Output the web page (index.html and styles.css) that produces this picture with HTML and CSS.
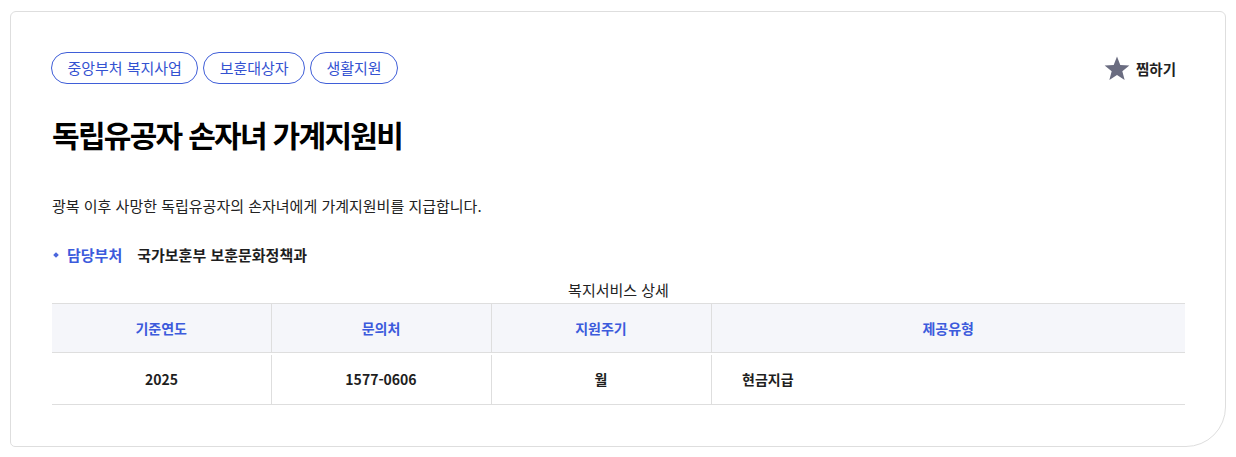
FILE: index.html
```html
<!DOCTYPE html>
<html lang="ko">
<head>
<meta charset="utf-8">
<title>독립유공자 손자녀 가계지원비</title>
<link rel="stylesheet" href="styles.css">
</head>
<body>
<div class="card">
  <div class="card-head">
    <ul class="tags">
      <li class="tag">중앙부처 복지사업</li>
      <li class="tag">보훈대상자</li>
      <li class="tag">생활지원</li>
    </ul>
    <button class="fav" type="button">
      <svg class="star" width="26" height="25" viewBox="0 0 26 25" aria-hidden="true"><polygon points="13,0.5 16.29,8.97 25.36,9.48 18.33,15.23 20.64,24.02 13,19.1 5.36,24.02 7.67,15.23 0.64,9.48 9.71,8.97" fill="#6a6c80"/></svg>
      <span>찜하기</span>
    </button>
  </div>
  <h1 class="title">독립유공자 손자녀 가계지원비</h1>
  <p class="desc">광복 이후 사망한 독립유공자의 손자녀에게 가계지원비를 지급합니다.</p>
  <div class="dept">
    <span class="dept-label">담당부처</span>
    <span class="dept-value">국가보훈부 보훈문화정책과</span>
  </div>
  <table class="detail">
    <caption>복지서비스 상세</caption>
    <colgroup>
      <col class="c1"><col class="c2"><col class="c3"><col class="c4">
    </colgroup>
    <thead>
      <tr><th>기준연도</th><th>문의처</th><th>지원주기</th><th>제공유형</th></tr>
    </thead>
    <tbody>
      <tr><td class="center">2025</td><td class="center">1577-0606</td><td class="center">월</td><td class="left">현금지급</td></tr>
    </tbody>
  </table>
</div>
</body>
</html>
```

FILE: styles.css
```css
* { box-sizing: border-box; }
html, body { margin: 0; padding: 0; background: #fff; }
body {
  padding: 11px 0 0 10px;
  font-family: "Noto Sans CJK KR", "Noto Sans", sans-serif;
  color: #1e1e1e;
}
.card {
  width: 1216px;
  height: 436px;
  border: 1px solid #dedede;
  border-radius: 6px 6px 40px 5px;
  padding: 40px 40px 0 41px;
}
.card-head {
  display: flex;
  justify-content: space-between;
  align-items: center;
}
.tags {
  display: flex;
  gap: 5px;
  list-style: none;
  margin: 0 0 0 -1px;
  padding: 0;
}
.tag {
  height: 32px;
  line-height: 30px;
  padding: 0 15.5px;
  border: 1px solid #3f5ed8;
  border-radius: 16px;
  color: #3452d1;
  font-size: 15px;
  letter-spacing: -0.05px;
}
.fav {
  display: flex;
  align-items: center;
  gap: 6px;
  background: none;
  border: 0;
  padding: 0;
  margin-right: 9px;
  font-family: inherit;
  font-size: 14.5px;
  font-weight: 700;
  color: #222;
}
.title {
  margin: 30px 0 0;
  font-size: 30px;
  line-height: 40px;
  font-weight: 700;
  letter-spacing: -1.7px;
  color: #000;
}
.desc {
  margin: 41px 0 0;
  font-size: 15px;
  line-height: 22px;
  color: #222;
}
.dept {
  display: flex;
  align-items: center;
  margin-top: 27px;
  font-size: 15px;
  line-height: 22px;
  font-weight: 700;
}
.dept-label {
  position: relative;
  padding-left: 15px;
  color: #3c5bdc;
  margin-right: 15px;
}
.dept-label::before {
  content: "";
  position: absolute;
  left: 2px;
  top: 9px;
  width: 4px;
  height: 4px;
  background: #4a66dd;
  transform: rotate(45deg);
}
.dept-value { color: #1e1e1e; }
.detail {
  width: 1133px;
  margin-top: 13px;
  border-collapse: collapse;
  font-size: 14px;
}
.detail caption {
  height: 24px;
  line-height: 22px;
  font-size: 15px;
  color: #222;
}
.c1 { width: 219px; }
.c2, .c3 { width: 220px; }
.detail th {
  height: 49px;
  background: #f5f6fa;
  color: #3c5bdc;
  font-weight: 700;
  border-top: 1px solid #dedede;
  border-bottom: 1px solid #dedede;
  border-left: 1px solid #dedede;
  padding: 0;
}
.detail th:first-child { border-left: 0; }
.detail td {
  position: relative;
  height: 52px;
  padding: 0;
  font-weight: 700;
  color: #1e1e1e;
  border-bottom: 1px solid #dedede;
}
.detail td + td::before {
  content: "";
  position: absolute;
  left: 0;
  top: 2px;
  bottom: 0;
  width: 1px;
  background: #dedede;
}
.detail .center { text-align: center; }
.detail .left { text-align: left; padding-left: 31px; }
```
